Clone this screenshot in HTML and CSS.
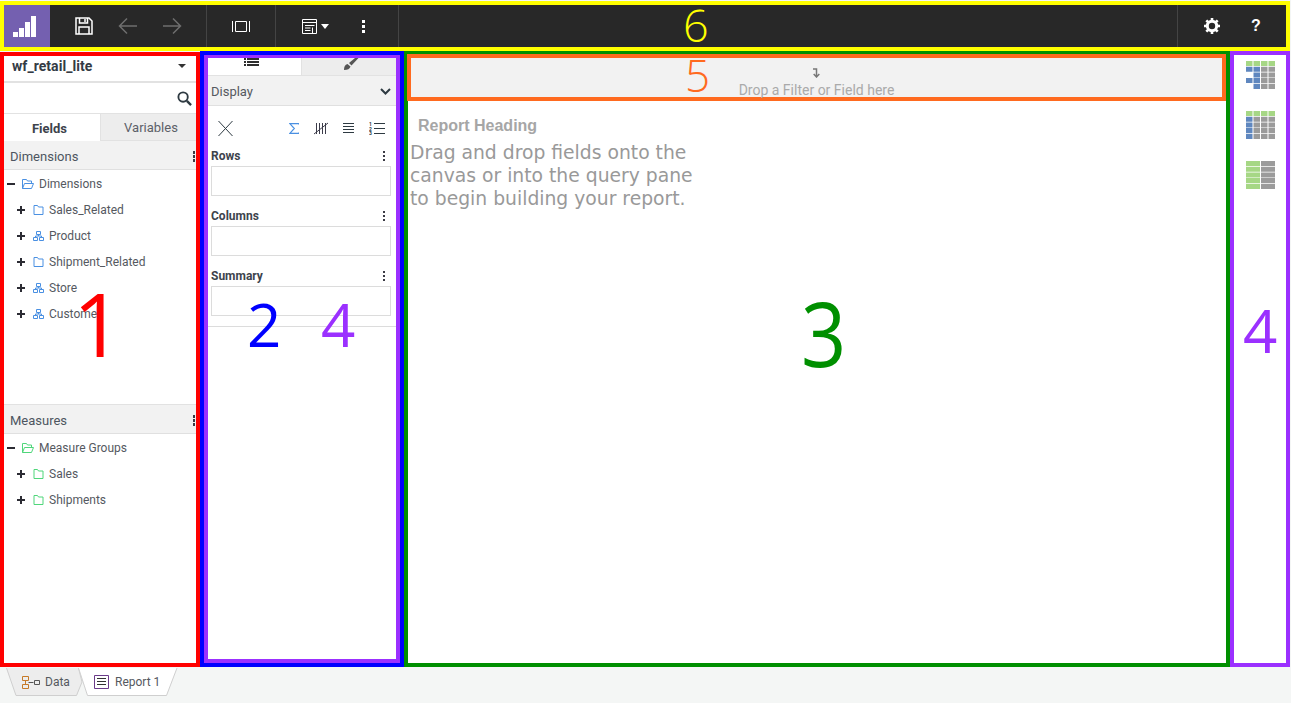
FILE: index.html
```html
<!DOCTYPE html>
<html lang="en">
<head>
<meta charset="utf-8">
<title>Report canvas</title>
<link rel="stylesheet" href="styles.css">
</head>
<body>
<div class="app">
  <header class="toolbar">
    <div class="logo">
      <svg width="23" height="21" viewBox="0 0 23 21"><path fill="#fff" d="M0 16h5v5H0zM6 12h5v9H6zM12 6h5v15h-5zM18 0h5v21h-5z"/></svg>
    </div>
    <div class="tb-group g1">
      <span class="tb-btn"><svg width="18" height="18" viewBox="0 0 18 18" fill="none" stroke="#fff" stroke-width="1.5"><path d="M1 1h13l3 3v13H1z"/><path d="M4.500 1v5h8V1M4 17v-7h10v7"/><path d="M10 2v3" /></svg></span>
      <span class="tb-btn"><svg width="20" height="18" viewBox="0 0 20 18" fill="none" stroke="#6e6e6e" stroke-width="1.500"><path d="M19 9H2M9 1.500 1.500 9 9 16.500"/></svg></span>
      <span class="tb-btn"><svg width="20" height="18" viewBox="0 0 20 18" fill="none" stroke="#6e6e6e" stroke-width="1.500"><path d="M1 9h17M11 1.500 18.500 9 11 16.500"/></svg></span>
    </div>
    <div class="tb-group g2">
      <svg width="18" height="11" viewBox="0 0 18 11" fill="none" stroke="#fff"><path d="M.5 0v11M17.500 0v11M3.500.5h11v10h-11z"/></svg>
    </div>
    <div class="tb-group g3">
      <svg width="16" height="15" viewBox="0 0 16 15" fill="none" stroke="#fff"><path d="M.5.5h14v14H.5zM.5 3.500h14M3 6.500h9.500M3 9h5.500M3 11.500h5.500M10.500 8.500v6"/></svg>
      <span class="caret"></span>
    </div>
    <div class="tb-group g4"><span class="dots-w"><i></i><i></i><i></i></span></div>
    <div class="tb-spacer"></div>
    <div class="tb-group g5">
      <svg width="16" height="16" viewBox="0 0 16 16"><circle cx="8" cy="8" r="4.700" fill="none" stroke="#fff" stroke-width="3"/><path stroke="#fff" stroke-width="2.600" d="M8 0v3M8 13v3M0 8h3M13 8h3M2.300 2.300l2.200 2.200M11.500 11.500l2.200 2.200M13.700 2.300l-2.200 2.200M4.500 11.500l-2.200 2.200"/></svg>
      <b class="help">?</b>
    </div>
  </header>

  <main class="workspace">
    <aside class="fields">
      <div class="source"><span>wf_retail_lite</span><i class="caret-dark"></i></div>
      <div class="search">
        <svg width="15" height="15" viewBox="0 0 16 16" fill="none" stroke="#2e3a42" stroke-width="2"><circle cx="6.500" cy="6.500" r="5"/><path stroke-width="2.500" d="m10.500 10.500 4.500 4.500"/></svg>
      </div>
      <div class="tabs">
        <span class="tab on">Fields</span>
        <span class="tab">Variables</span>
      </div>
      <section class="dims">
        <div class="sec-head"><span>Dimensions</span><span class="dots"><i></i><i></i><i></i></span></div>
        <ul class="tree">
          <li class="root"><i class="minus"></i>
            <svg class="ic" width="12" height="10" viewBox="0 0 12 10" fill="none" stroke="#4a90e2"><path d="M.5 9.500v-9h4l1 1.500h4v2M.5 9.500h9l2-5h-9z"/></svg>Dimensions</li>
          <li><i class="plus"></i>
            <svg class="ic" width="10" height="10" viewBox="0 0 10 10" fill="none" stroke="#4a90e2"><path d="M.5 9.500v-9h3.500l1 1.500h4.500v7.500z"/></svg>Sales_Related</li>
          <li><i class="plus"></i>
            <svg class="ic" width="11" height="10" viewBox="0 0 11 10" fill="none" stroke="#4a90e2"><path d="M3.500.5h4v3h-4zM.5 6.500h4v3h-4zM6.500 6.500h4v3h-4zM5.500 3.500v1.500M2.500 6.500V5h6v1.500"/></svg>Product</li>
          <li><i class="plus"></i>
            <svg class="ic" width="10" height="10" viewBox="0 0 10 10" fill="none" stroke="#4a90e2"><path d="M.5 9.500v-9h3.500l1 1.500h4.500v7.500z"/></svg>Shipment_Related</li>
          <li><i class="plus"></i>
            <svg class="ic" width="11" height="10" viewBox="0 0 11 10" fill="none" stroke="#4a90e2"><path d="M3.500.5h4v3h-4zM.5 6.500h4v3h-4zM6.500 6.500h4v3h-4zM5.500 3.500v1.500M2.500 6.500V5h6v1.500"/></svg>Store</li>
          <li><i class="plus"></i>
            <svg class="ic" width="11" height="10" viewBox="0 0 11 10" fill="none" stroke="#4a90e2"><path d="M3.500.5h4v3h-4zM.5 6.500h4v3h-4zM6.500 6.500h4v3h-4zM5.500 3.500v1.500M2.500 6.500V5h6v1.500"/></svg>Customer</li>
        </ul>
      </section>
      <section class="meas">
        <div class="sec-head"><span>Measures</span><span class="dots"><i></i><i></i><i></i></span></div>
        <ul class="tree">
          <li class="root"><i class="minus"></i>
            <svg class="ic" width="12" height="10" viewBox="0 0 12 10" fill="none" stroke="#4fd67a"><path d="M.5 9.500v-9h4l1 1.500h4v2M.5 9.500h9l2-5h-9z"/></svg>Measure Groups</li>
          <li><i class="plus"></i>
            <svg class="ic" width="10" height="10" viewBox="0 0 10 10" fill="none" stroke="#4fd67a"><path d="M.5 9.500v-9h3.500l1 1.500h4.500v7.500z"/></svg>Sales</li>
          <li><i class="plus"></i>
            <svg class="ic" width="10" height="10" viewBox="0 0 10 10" fill="none" stroke="#4fd67a"><path d="M.5 9.500v-9h3.500l1 1.500h4.500v7.500z"/></svg>Shipments</li>
        </ul>
      </section>
    </aside>

    <aside class="query-outer">
      <div class="query">
        <div class="q-tabs">
          <span class="q-tab on"><svg width="15" height="8" viewBox="0 0 15 8" fill="#2e2e2e"><path d="M0 0h2v2H0zM3 0h12v2H3zM0 3h2v2H0zM3 3h12v2H3zM0 6h2v2H0zM3 6h12v2H3z"/></svg></span>
          <span class="q-tab brush"><svg width="15" height="12" viewBox="0 0 15 12"><path fill="#555" d="M0 12c0-3.500 1-5.500 3.500-6l3 2.500C6 11 3.500 12 0 12z"/><path fill="#555" d="M5 5 11 0h3.500L7.500 7.500z"/></svg></span>
        </div>
        <div class="display"><span>Display</span>
          <svg width="11" height="7" viewBox="0 0 11 7" fill="none" stroke="#2e3a42" stroke-width="2"><path d="m1 1 4.500 4.500L10 1"/></svg>
        </div>
        <div class="q-icons">
          <svg class="x" width="15" height="15" viewBox="0 0 15 15" fill="none" stroke="#2e3a42"><path d="m.5 0 14 15M14.500 0 .5 15"/></svg>
          <span class="q-right">
            <svg width="10" height="11" viewBox="0 0 10 11" fill="none" stroke="#4a90e2" stroke-width="1.200"><path d="M9.700 1.500V.6H.8l4.500 4.900L.8 10.400h8.900v-.9"/></svg>
            <svg width="14" height="13" viewBox="0 0 14 13" fill="none" stroke="#3c3c4a"><path d="M2.500 1v11M5.500 1v11M8.500 1v11M11.500 1v11M0 12 14 1"/></svg>
            <svg width="11" height="10" viewBox="0 0 11 10" fill="none" stroke="#2e3a42"><path d="M0 .5h11M0 3.500h11M0 6.500h11M0 9.500h11"/></svg>
            <svg width="16" height="13" viewBox="0 0 16 13"><path fill="none" stroke="#2e3a42" d="M5 1.500h11M5 6.500h11M5 11.500h11"/><g class="num-digits"><text x="0" y="4">1</text><text x="0" y="8.500">2</text><text x="0" y="13">3</text></g></svg>
          </span>
        </div>
        <div class="drop-head"><b>Rows</b><span class="dots"><i></i><i></i><i></i></span></div>
        <div class="drop"></div>
        <div class="drop-head"><b>Columns</b><span class="dots"><i></i><i></i><i></i></span></div>
        <div class="drop"></div>
        <div class="drop-head"><b>Summary</b><span class="dots"><i></i><i></i><i></i></span></div>
        <div class="drop"></div>
        <div class="q-rule"></div>
      </div>
    </aside>

    <section class="canvas">
      <div class="filter">
        <svg width="7" height="10" viewBox="0 0 7 10" fill="none" stroke="#777" stroke-width="1.500"><path d="M0 1h3.500v7.500M.7 6 3.500 9 6.300 6"/></svg>
        <span>Drop a Filter or Field here</span>
      </div>
      <h2 class="heading">Report Heading</h2>
      <p class="hint">Drag and drop fields onto the<br>canvas or into the query pane<br>to begin building your report.</p>
    </section>

    <aside class="styles">
      <svg width="29" height="28" viewBox="0 0 29 28">
        <g fill="#a6d785"><path d="M0 0h6.500v5H0zM7.500 0H14v5H7.500zM15 0h6.500v5H15zM22.500 0H29v5h-6.500z"/></g>
        <g fill="#5f87bf"><path d="M0 5.700h6.500v5H0zM7.500 5.700H14v5H7.500zM7.500 11.400H14v5H7.500zM0 17.100h6.500v5H0zM7.500 17.100H14v5H7.500zM7.500 22.800H14V28H7.500z"/></g>
        <g fill="#9b9b9b"><path d="M15 5.700h6.500v5H15zM22.500 5.700H29v5h-6.500zM15 11.400h6.500v5H15zM22.500 11.400H29v5h-6.500zM15 17.100h6.500v5H15zM22.500 17.100H29v5h-6.500zM15 22.800h6.500V28H15zM22.500 22.800H29V28h-6.500z"/></g>
      </svg>
      <svg width="29" height="28" viewBox="0 0 29 28">
        <g fill="#a6d785"><path d="M0 0h6.500v5H0zM7.500 0H14v5H7.500zM15 0h6.500v5H15zM22.500 0H29v5h-6.500z"/></g>
        <g fill="#5f87bf"><path d="M0 5.700h6.500v5H0zM0 11.400h6.500v5H0zM0 17.100h6.500v5H0zM0 22.800h6.500V28H0z"/></g>
        <g fill="#9b9b9b"><path d="M7.500 5.700H14v5H7.500zM15 5.700h6.500v5H15zM22.500 5.700H29v5h-6.500zM7.500 11.400H14v5H7.500zM15 11.400h6.500v5H15zM22.500 11.400H29v5h-6.500zM7.500 17.100H14v5H7.500zM15 17.100h6.500v5H15zM22.500 17.100H29v5h-6.500zM7.500 22.800H14V28H7.500zM15 22.800h6.500V28H15zM22.500 22.800H29V28h-6.500z"/></g>
      </svg>
      <svg width="29" height="28" viewBox="0 0 29 28">
        <g fill="#a6d785"><path d="M0 0h14v5H0zM0 5.700h14v5H0zM0 11.400h14v5H0zM0 17.100h14v5H0zM0 22.800h14V28H0z"/></g>
        <g fill="#9b9b9b"><path d="M15 0h14v5H15zM15 5.700h14v5H15zM15 11.400h14v5H15zM15 17.100h14v5H15zM15 22.800h14V28H15z"/></g>
      </svg>
    </aside>
  </main>

  <footer class="sheets">
    <span class="sheet data">
      <svg class="sheet-shape" width="78" height="28" viewBox="0 0 78 28"><path fill="#ededed" stroke="#cfcfcf" d="M.5 0 10 27.500h60.500L76 14 72.500 0"/></svg>
      <svg class="sheet-ic" width="18" height="13" viewBox="0 0 18 13" fill="none" stroke="#c67a28"><path d="M.5.5h6v4h-6zM.5 8.500h6v4h-6zM3.500 4.500v4"/><path stroke="#555" d="M6.500 6.500h5M12.500 4.500h5v4h-5z"/></svg>
      <span class="sheet-label">Data</span>
    </span>
    <span class="sheet report">
      <svg class="sheet-shape" width="100" height="28" viewBox="0 0 100 28"><path fill="#fff" stroke="#cfcfcf" d="M.5 0 9.500 27.500h79L99 0"/></svg>
      <svg class="sheet-ic" width="15" height="14" viewBox="0 0 15 14" fill="none" stroke="#333"><path stroke="#6b3b8a" d="M.5.500h14v13H.5z"/><path d="M3 3.500h9M3 6.500h9M3 9.500h9"/></svg>
      <span class="sheet-label">Report 1</span>
    </span>
  </footer>

  <span class="mark m1">1</span>
  <span class="mark m2">2</span>
  <span class="mark m3">3</span>
  <span class="mark m4a">4</span>
  <span class="mark m4b">4</span>
  <span class="mark m5">5</span>
  <span class="mark m6">6</span>
</div>
</body>
</html>
```

FILE: styles.css
```css
* { box-sizing: border-box; }
html, body { margin: 0; padding: 0; }
body { background: #f4f6f5; font-family: Roboto, "Liberation Sans", sans-serif; color: #4a4f57; }
ul { list-style: none; margin: 0; padding: 0; }
h2, p { margin: 0; }

.app { position: relative; width: 1291px; height: 703px; overflow: hidden; padding-top: 1px; }

/* Toolbar */
.toolbar { display: flex; align-items: stretch; width: 1290px; height: 50px; border: 4px solid #ffff00; background: #282828; }
.logo { width: 46px; background: #7460b0; display: flex; align-items: center; padding: 0 0 0 9px; }
.tb-group { display: flex; align-items: center; border-right: 1px solid #444; }
.g1 { width: 157px; padding-left: 12px; }
.tb-btn { width: 44px; display: flex; justify-content: center; }
.g2 { width: 69px; justify-content: center; }
.g3 { width: 68px; padding-left: 26px; gap: 3px; border-right: 0; }
.g4 { width: 55px; padding-left: 18px; }
.tb-spacer { flex: 1; border-right: 1px solid #444; }
.g5 { width: 108px; border-right: 0; padding-left: 26px; gap: 31px; }
.caret { width: 0; height: 0; border: 4px solid transparent; border-top: 5px solid #fff; border-bottom: 0; }
.dots-w { display: flex; flex-direction: column; gap: 2px; }
.dots-w i { width: 3px; height: 3px; background: #fff; }
.help { font: 700 16px "Liberation Sans", sans-serif; color: #fff; }

/* Work area */
.workspace { display: grid; grid-template-columns: 200px 204px 826px 60px; height: 616px; }

/* Fields pane */
.fields { margin-top: 1px; border: 4px solid #ff0000; background: #fff; display: flex; flex-direction: column; }
.source { height: 27px; flex: none; border-bottom: 2px solid #e2e2e2; display: flex; align-items: center; justify-content: space-between; padding: 0 10px 5px 8px; font-weight: 700; font-size: 14px; letter-spacing: .05px; color: #333b45; }
.caret-dark { width: 0; height: 0; border: 4px solid transparent; border-top: 4px solid #333; border-bottom: 0; }
.search { height: 31px; flex: none; border-bottom: 1px solid #e2e2e2; display: flex; align-items: center; justify-content: flex-end; padding: 0 4px 0 0; }
.tabs { display: flex; height: 27px; flex: none; }
.tab { flex: 1; display: flex; align-items: center; justify-content: center; padding: 1px 0 0 5px; font-size: 13px; background: #ededed; border-bottom: 1px solid #e2e2e2; color: #5c6068; }
.tab.on { flex: none; width: 97px; padding: 1px 5px 0 0; background: #fff; font-weight: 700; color: #3d434c; border-right: 1px solid #e2e2e2; border-bottom: 0; }
.dims { flex: none; height: 264px; border-bottom: 1px solid #e2e2e2; }
.sec-head { height: 29px; background: #f2f2f2; border-bottom: 1px solid #e0e0e0; display: flex; align-items: center; justify-content: space-between; padding: 3px 1px 0 6px; font-size: 13px; color: #4d5560; }
.dots { display: flex; flex-direction: column; gap: 1.500px; }
.dots i { display: block; width: 2.500px; height: 2.500px; background: #3a3a44; }
.tree { padding-top: 1px; font-size: 12px; color: #55595f; }
.tree li { height: 26px; display: flex; align-items: center; padding-left: 13px; }
.tree li.root { padding-left: 3px; }
.tree li .ic { margin-right: 5px; flex: none; }
.tree li:not(.root) .ic { margin-left: 1px; width: 11px; }
.minus, .plus { position: relative; display: block; width: 8px; height: 2px; background: #2c2c34; margin-right: 7px; flex: none; }
.plus::after { content: ""; position: absolute; left: 3px; top: -3px; width: 2px; height: 8px; background: #2c2c34; }

/* Query pane */
.query-outer { border: 4px solid #0000ff; }
.query { height: 100%; border: 4px solid #9b30ff; border-top-width: 3px; background: #fff; }
.q-tabs { display: flex; height: 18px; border-bottom: 1px solid #e2e2e2; }
.q-tab { flex: 1; display: flex; justify-content: center; align-items: flex-start; background: #ededed; overflow: hidden; }
.q-tab.on { flex: none; width: 94px; padding-right: 7px; background: #fff; border-right: 1px solid #e2e2e2; }
.q-tab.brush { padding-left: 4px; }
.display { height: 30px; background: #f2f2f2; border-bottom: 1px solid #e0e0e0; display: flex; align-items: center; justify-content: space-between; padding: 2px 5px 0 3px; font-size: 13px; color: #55595f; }
.q-icons { height: 41px; display: flex; align-items: center; justify-content: space-between; padding: 3px 11px 0 10px; }
.q-right { display: flex; align-items: center; gap: 15px; }
.num-digits { font: 700 5px Roboto, sans-serif; fill: #2e3a42; }
.drop-head { height: 19px; display: flex; align-items: center; justify-content: space-between; padding: 0 11px 1px 3px; font-size: 12px; color: #3d434c; }
.drop-head b { font-weight: 700; }
.drop { height: 30px; margin: 0 5px 0 3px; border: 1px solid #dcdcdc; }
.drop + .drop-head { margin-top: 11px; }
.q-rule { margin-top: 10px; border-top: 1px solid #dcdcdc; }

/* Canvas */
.canvas { border: 4px solid #008f00; background: #fff; width: 826px; }
.filter { margin: -1px 0 0 -1px; width: 819px; height: 47px; border: 4px solid #ff6a1f; background: #f2f2f2; display: flex; flex-direction: column; align-items: center; padding-top: 10px; font-size: 14px; color: #aaa; }
.filter svg { flex: none; }
.filter span { flex: none; line-height: 15px; margin-top: 5px; white-space: nowrap; }
.heading { font: 700 16px "Liberation Sans", sans-serif; color: #a6a6a6; padding: 16px 0 0 10px; line-height: 18px; }
.hint { font: 18.750px/23px "DejaVu Sans", sans-serif; color: #999; padding: 6px 0 0 2px; white-space: nowrap; }

/* Chart styles */
.styles { border: 4px solid #9b30ff; background: #fff; width: 60px; height: 616px; display: flex; flex-direction: column; align-items: center; gap: 22px; padding: 6px 0 0 1px; }

/* Sheets */
.sheets { display: flex; padding: 1px 0 0 6px; height: 35px; font-size: 12px; color: #55595f; }
.sheet { position: relative; display: flex; align-items: center; gap: 5px; height: 28px; padding-left: 16px; white-space: nowrap; }
.data { width: 72px; }
.report { width: 99px; gap: 6px; }
.sheet-shape { position: absolute; left: 0; top: 0; }
.sheet-ic, .sheet-label { position: relative; }

/* Annotation numerals */
.mark { position: absolute; font-family: "Open Sans", sans-serif; line-height: 1; }
.m1 { left: 73px; top: 280px; font-size: 87px; color: #ff0000; }
.m2 { left: 247px; top: 294px; font-size: 60px; color: #0000ff; }
.m3 { left: 798px; top: 287px; font-size: 90px; color: #008f00; transform: scaleX(.88); }
.m4a { left: 321px; top: 294px; font-size: 60px; color: #9b30ff; }
.m4b { left: 1243px; top: 300px; font-size: 60px; color: #9b30ff; }
.m5 { left: 685px; top: 53px; font-size: 44px; font-weight: 300; color: #ff6a1f; }
.m6 { left: 683px; top: 2px; font-size: 45px; font-weight: 300; color: #ffff00; }
```
